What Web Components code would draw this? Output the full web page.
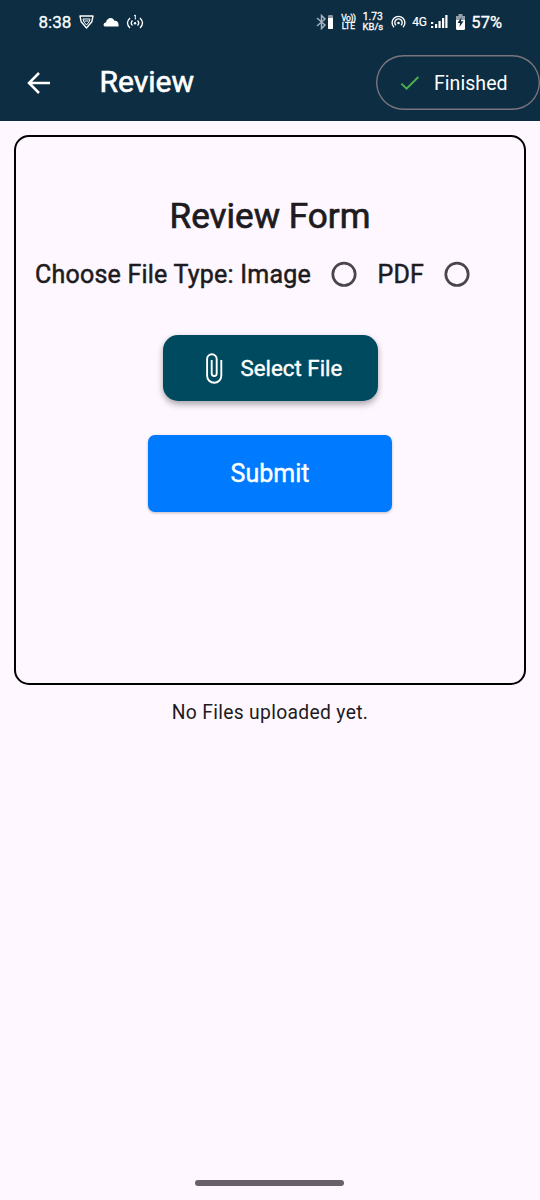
<!DOCTYPE html>
<html lang="en"><head><meta charset="utf-8"><title>Review</title>
<style>
html,body{margin:0;height:100%}
body{font-family:Roboto,"Noto Sans",sans-serif;background:#fef7ff;color:#1d1b20}
</style></head><body>
<review-app></review-app>
<script>
function define(name, html){
  const t=document.createElement('template');t.innerHTML=html;
  customElements.define(name,class extends HTMLElement{
    constructor(){super();this.attachShadow({mode:'open'}).append(t.content.cloneNode(true));}
  });
}
define('status-bar',`<style>
:host{display:flex;justify-content:space-between;height:37px;padding:7px 38px 0 38.500px;box-sizing:border-box;color:#fff}
.g{display:flex;align-items:center;height:30px}
svg{display:block;flex:none}
.t{font-size:17px;line-height:30px;-webkit-text-stroke:.3px #fff;white-space:nowrap}
.s{font-size:10.300px;line-height:10px;text-align:center;-webkit-text-stroke:.3px #fff;white-space:nowrap}
</style>
<div class="g"><span class="t" style="width:40.500px">8:38</span>
<svg width="15" height="14" viewBox="0 0 15 14" fill="none" stroke="#fff" stroke-width="1.4" stroke-linejoin="round"><path d="M1 1H14L12.8 6.8L7.5 13L2.2 6.8Z"/><path d="M4 4H11L10 7L7.5 10L5 7Z" stroke-width="1"/><path d="M5.500 6H9.500" stroke-width="1"/></svg>
<svg width="16" height="10" viewBox="0 0 16 10" style="margin-left:9px"><path fill="#fff" d="M2.500 9.500C-.3 9.500.1 5.400 3 5.500C3.700 0 10.300 -.6 11.400 3.800C14.200 3.400 16 5.500 15.500 9.500Z"/></svg>
<svg width="18" height="16" viewBox="0 0 18 16" style="margin-left:7px" fill="none" stroke="#fff" stroke-width="1.300"><path d="M4 4Q-1 9 4 14M6.500 6.500Q4 9 6.500 11.500M14 4Q19 9 14 14M11.500 6.500Q14 9 11.500 11.500"/><circle cx="9" cy="9.300" r="1.200" fill="#fff" stroke="none"/><path d="M8 2L9.300 1V5.500" stroke-width="1"/></svg>
</div>
<div class="g">
<svg width="18" height="16" viewBox="0 0 18 16"><path d="M1 4L9 11L5.500 14.500V1.500L9 5L1 12" fill="none" stroke="#a5b0bb" stroke-width="1.500"/><rect x="12" y="1" width="5" height="14" rx="1.200" fill="#8d9aa5"/><path d="M12 4H17V14Q17 15 16 15H13Q12 15 12 14Z" fill="#fff"/></svg>
<span class="s" style="width:14px;margin-left:7px;line-height:8px"><span style="font-size:8.500px;letter-spacing:-.5px">Vo))</span><br><span style="font-size:8.500px">LTE</span></span>
<span class="s" style="width:21px;margin-left:7px">1.73<br><span style="font-size:9.500px">KB/s</span></span>
<svg width="15" height="14" viewBox="0 0 15 14" style="margin-left:8px" fill="none" stroke="#fff" stroke-width="1.400"><path d="M3 12.300A6.400 6.400 0 1 1 12 12.300"/><path d="M5 10.300A3.700 3.700 0 1 1 10 10.300"/><circle cx="7.500" cy="8" r="1.300" fill="#fff" stroke="none"/></svg>
<span class="t" style="font-size:12px;width:15px;margin-left:6px;letter-spacing:-.35px;-webkit-text-stroke:.2px #fff">4G</span>
<svg width="18" height="14" viewBox="0 0 18 14" fill="#fff" style="margin-left:3px"><path d="M1 7H3.200V9H1ZM1 11H3.200V13H1ZM5 9H7.200V13H5ZM8.500 6H10.700V13H8.500ZM12 3H14.200V13H12ZM15.300 0H17.500V13H15.300Z"/></svg>
<svg width="9" height="16" viewBox="0 0 9 16" style="margin-left:8px"><path d="M2.500 0H6.500V2H9V8H0V2H2.500Z" fill="#93a0aa"/><path d="M0 6H9V14.500Q9 16 7.500 16H1.500Q0 16 0 14.500Z" fill="#fff"/><path d="M5.500 3L1.500 9H4L3.500 13L7.500 7.300H5Z" fill="#0e2d42"/></svg>
<span class="t" style="margin-left:6px;font-size:16.500px;padding-top:1px">57%</span>
</div>`);
define('finish-button',`<style>
:host{display:flex;align-items:center;box-sizing:border-box;width:164px;height:55px;box-shadow:inset 0 0 0 1.400px #79747e;border-radius:28px;padding:1px 0 0 24px;color:#fff;font-size:19.500px;letter-spacing:.05px}
svg{margin:0 14px 1px 0;flex:none}
</style><svg width="20" height="16" viewBox="0 0 20 16"><path d="M1.400 8.600L6.600 13.700L18.300 2" fill="none" stroke="#4caf50" stroke-width="2"/></svg><slot></slot>`);
define('app-bar',`<style>
:host{display:flex;height:84px;align-items:flex-start;color:#fff}
svg{display:block;margin:34px 0 0 26.500px}
h1{margin:27px 0 0 49px;font-size:30px;line-height:36px;font-weight:400;-webkit-text-stroke:.6px #fff;flex:1}
finish-button{margin-top:18px}
</style><svg width="24" height="24" viewBox="0 0 24 24"><path d="M23 12H2.500M12 2L2 12L12 22" fill="none" stroke="#fff" stroke-width="2.500"/></svg><h1><slot></slot></h1><finish-button>Finished</finish-button>`);
define('radio-dot',`<style>:host{display:block;flex:none;width:26px;height:26px}svg{display:block}</style><svg width="26" height="26"><circle cx="13" cy="13.300" r="11.200" fill="none" stroke="#49454f" stroke-width="2.700"/></svg>`);
define('file-type-row',`<style>
:host{display:flex;align-items:center;height:36px;font-size:25px;-webkit-text-stroke:.5px #1d1b20;white-space:nowrap}
.a{width:296px;letter-spacing:.22px}.b{width:66px;margin-left:20.500px;letter-spacing:.22px}
</style><span class="a">Choose File Type: Image</span><radio-dot></radio-dot><span class="b">PDF</span><radio-dot></radio-dot>`);
define('select-button',`<style>
:host{display:flex;align-items:center;box-sizing:border-box;width:215px;height:66px;padding-left:42px;border-radius:15px;background:#004a5f;color:#fff;font-size:22.300px;-webkit-text-stroke:.4px #fff;box-shadow:0 4px 6px rgba(0,0,0,.26),0 1px 6px rgba(0,0,0,.1);white-space:nowrap}
svg{margin-right:18px;flex:none}
</style><svg width="18" height="32" viewBox="0 0 18 32"><path d="M16.300 8V23.700A7.100 7.100 0 0 1 2.100 23.700V7A4.800 4.800 0 0 1 11.700 7V21.500A2.500 2.500 0 0 1 6.700 21.500V8" fill="none" stroke="#fff" stroke-width="1.900"/></svg><slot></slot>`);
define('submit-button',`<style>
:host{display:flex;align-items:center;justify-content:center;width:244px;height:77px;border-radius:7px;background:#007aff;color:#fff;font-size:25px;-webkit-text-stroke:.4px #fff;box-shadow:0 1px 3px rgba(0,0,0,.25)}
</style><slot></slot>`);
define('review-form',`<style>
:host{display:flex;flex-direction:column;align-items:center;box-sizing:border-box;width:512px;height:550px;margin:14px auto 0;border:2px solid #000;border-radius:15px;padding-top:57px}
h2{margin:0;font-size:35.100px;line-height:44px;font-weight:400;-webkit-text-stroke:.7px #1d1b20}
file-type-row{align-self:stretch;margin:18px 0 0 19px}
select-button{margin:43px 0 0 0}submit-button{margin-top:34px}
</style><h2>Review Form</h2><file-type-row></file-type-row><select-button>Select File</select-button><submit-button>Submit</submit-button>`);
define('review-app',`<style>
:host{display:flex;flex-direction:column;height:1200px;background:#fef7ff}
header{background:#0c2d42;flex:none}
review-form{flex:none}
p{margin:15px 0 0;text-align:center;font-size:19.300px;line-height:26px;letter-spacing:.32px}
.home{width:149px;height:6px;border-radius:3px;background:#676168;margin:auto 196px 14px 195px}
</style><header><status-bar></status-bar><app-bar>Review</app-bar></header><review-form></review-form><p>No Files uploaded yet.</p><div class="home"></div>`);
</script></body></html>
